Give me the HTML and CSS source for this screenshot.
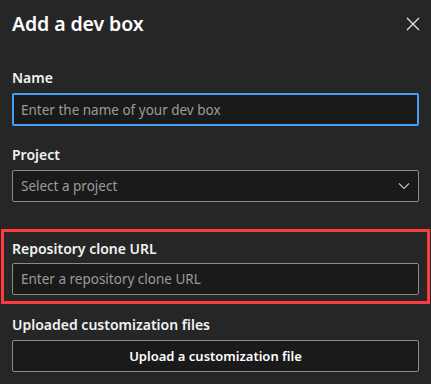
FILE: index.html
```html
<!DOCTYPE html>
<html>
<head>
<meta charset="utf-8">
<link rel="stylesheet" href="styles.css">
</head>
<body>
<div class="panel">
  <div class="header">
    <h1 class="title">Add a dev box</h1>
    <button class="close" aria-label="Close">
      <svg width="14" height="14" viewBox="0 0 14 14"><path d="M1 1 L13 13 M13 1 L1 13" stroke="#e6e6e6" stroke-width="1.3" fill="none"/></svg>
    </button>
  </div>
  <div class="field first">
    <label class="label">Name</label>
    <div class="input focused"><span class="placeholder">Enter the name of your dev box</span></div>
  </div>
  <div class="field">
    <label class="label">Project</label>
    <div class="input select"><span class="placeholder">Select a project</span>
      <svg class="chev" width="12" height="8" viewBox="0 0 12 8"><path d="M1 1.5 L6 6.5 L11 1.5" stroke="#bdbdbd" stroke-width="1.2" fill="none"/></svg>
    </div>
  </div>
  <div class="highlight">
    <label class="label">Repository clone URL</label>
    <div class="input"><span class="placeholder">Enter a repository clone URL</span></div>
  </div>
  <div class="field upload">
    <label class="label">Uploaded customization files</label>
    <button class="btn">Upload a customization file</button>
  </div>
</div>
</body>
</html>
```
FILE: styles.css
```css
html, body { margin: 0; padding: 0; }
body {
  background: #262626;
  font-family: "Noto Sans", "Open Sans", sans-serif;
  color: #ffffff;
  width: 431px;
  height: 384px;
  overflow: hidden;
}
.panel { padding: 0 12px; }
.header {
  display: flex;
  justify-content: space-between;
  align-items: center;
  height: 46px;
}
.title {
  margin: 0;
  font-size: 19.5px;
  font-weight: 600;
  letter-spacing: -0.1px;
}
.close {
  background: none;
  border: 0;
  padding: 0;
  margin: 2px -1px 0 0;
  display: flex;
}
.field { display: flex; flex-direction: column; }
.field.first { margin-top: 23px; }
.field + .field { margin-top: 20px; }
.label {
  font-size: 14px;
  font-weight: 600;
  line-height: 18px;
  margin-bottom: 6px;
  color: #f2f2f2;
}
.input {
  box-sizing: border-box;
  height: 32px;
  border: 1px solid #8a8a8a;
  border-radius: 2px;
  background: #1b1a1a;
  display: flex;
  align-items: center;
  padding: 0 8px;
}
.input.focused { border: 2px solid #479ef5; padding: 0 7px; height: 33px; }
.placeholder { font-size: 13.5px; color: #9a9a9a; flex: 1; }
.highlight {
  margin: 27px -11px 0 -11px;
  border: 3px solid #ff3b40;
  padding: 8px 8px 6px 8px;
  display: flex;
  flex-direction: column;
}
.highlight .label { margin-bottom: 5px; }
.upload { margin-top: 12px; }
.btn {
  box-sizing: border-box;
  height: 32px;
  border: 1px solid #8a8a8a;
  border-radius: 2px;
  background: #1b1a1a;
  color: #ffffff;
  font-family: inherit;
  font-size: 13px;
  font-weight: 600;
}
```
